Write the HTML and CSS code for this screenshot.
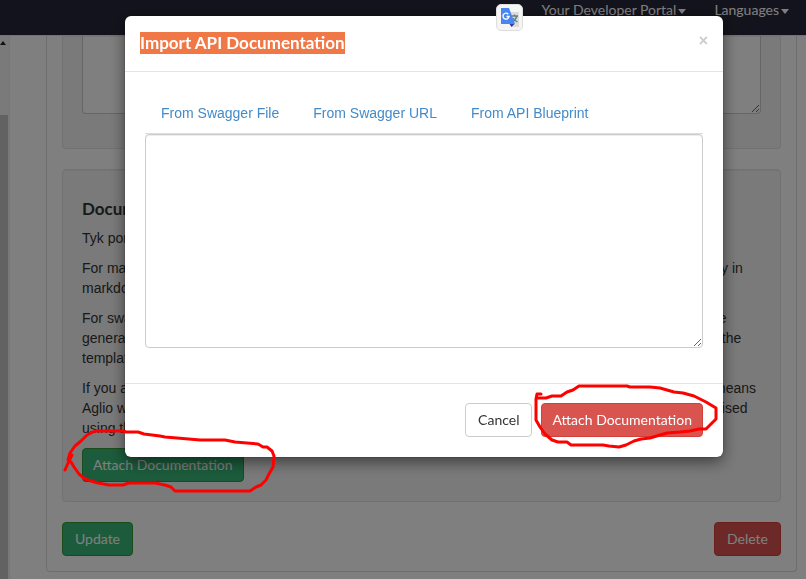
FILE: index.html
```html
<!DOCTYPE html>
<html lang="en">
<head>
<meta charset="utf-8">
<title>Developer Portal</title>
<link rel="stylesheet" href="styles.css">
</head>
<body>
<nav class="topbar">
  <a href="#">Your Developer Portal<i class="caret"></i></a>
  <a href="#">Languages<i class="caret"></i></a>
</nav>
<div class="page">
  <div class="scroller"><i class="arrow"></i><i class="thumb"></i></div>
  <main class="panel">
    <section class="well well-first">
      <textarea class="field" aria-label="Description"></textarea>
    </section>
    <section class="well">
      <h2>Documentation</h2>
      <p><span class="line"><span>Tyk portal</span></span></p>
      <p>
        <span class="line"><span>For markdown</span><span>tly in</span></span>
        <span class="line"><span>markdown</span></span>
      </p>
      <p>
        <span class="line"><span>For swagger</span><span>re</span></span>
        <span class="line"><span>generated</span><span>t the</span></span>
        <span class="line"><span>template</span></span>
      </p>
      <p>
        <span class="line"><span>If you are</span><span>means</span></span>
        <span class="line"><span>Aglio will</span><span>nised</span></span>
        <span class="line"><span>using the</span></span>
      </p>
      <button type="button" class="btn success attach">Attach Documentation</button>
    </section>
    <div class="actions">
      <button type="button" class="btn success">Update</button>
      <button type="button" class="btn danger">Delete</button>
    </div>
  </main>
</div>
<div class="backdrop">
  <div class="modal" role="dialog" aria-labelledby="modal-title">
    <header class="modal-header">
      <h1 id="modal-title"><mark>Import API Documentation</mark></h1>
      <button type="button" class="close" aria-label="Close">×</button>
    </header>
    <div class="modal-body">
      <div class="tabs">
        <a href="#">From Swagger File</a>
        <a href="#">From Swagger URL</a>
        <a href="#">From API Blueprint</a>
      </div>
      <textarea class="field source" aria-label="Documentation source"></textarea>
    </div>
    <footer class="modal-footer">
      <button type="button" class="btn plain">Cancel</button>
      <button type="button" class="btn danger attach">Attach Documentation</button>
    </footer>
  </div>
</div>
<button type="button" class="translate" aria-label="Translate">
  <svg width="20" height="20" viewBox="0 0 20 20">
    <path d="M8 4h11v15h-8z" fill="#dcdcdc"/>
    <path d="M11 8h7M14.500 6.500V8M17 8c-.8 3-2.500 4.500-5 6M13 10c1 2 2.500 3 4.500 4" fill="none" stroke="#607d80" stroke-width="1.300"/>
    <path d="M9.500 16h5l-3 3z" fill="#3436b4"/>
    <path d="M1 0h8l6 16H1z" fill="#4a86f0"/>
    <path d="M8.300 6.200A3 3 0 1 0 9 8.500H6.500" fill="none" stroke="#fff" stroke-width="1.400"/>
  </svg>
</button>
<svg class="marks" width="806" height="579" viewBox="0 0 806 579">
  <path d="M65 470L69 461 72 455M71 462L68 460 70 453 75 446 81 441 87 435 95 431H123L126 432H138L144 434 160 436 165 437 177 438 200 440H225L235 442 258 444 263 447H267L272 451 274 456 273 467 269 474 266 480 261 485 256 487 250 491H175L171 487 165 485 155 483H129L123 485H109L98 483 91 481 85 479 79 474 74 467 71 462"/>
  <path d="M541 394H537L536 399V420L540 427 545 434 552 440 558 442H567L571 445H603L609 446 619 447 626 445 634 441 641 439 650 438 660 435 667 433 680 432 690 431 699 429H706L710 425 716 419V408L706 402 694 396 683 393 674 392 660 388 650 387H630L627 386H579L573 390 567 392 561 396H552L546 398H537"/>
</svg>
</body>
</html>
```

FILE: styles.css
```css
* { box-sizing: border-box; }
body {
  margin: 0;
  min-height: 100vh;
  overflow: hidden;
  display: flex;
  flex-direction: column;
  background: #fff;
  color: #333;
  font: 14px/20px "Liberation Sans", Arial, sans-serif;
}
.topbar {
  height: 35px;
  padding: 0 17px;
  display: flex;
  justify-content: flex-end;
  gap: 28px;
  background: #27273a;
  font: 14px/20px Lato, sans-serif;
}
.topbar a { color: #fff; text-decoration: none; }
.caret {
  display: inline-block;
  margin-left: 2px;
  vertical-align: middle;
  border: 4px solid transparent;
  border-top: 5px solid #fff;
  border-bottom: 0;
}
.page { flex: 1; display: flex; border-top: 1px solid #e4e4e4; }
.scroller {
  width: 10px;
  margin-right: 36px;
  display: flex;
  flex-direction: column;
  background: #f5f5f5;
  border-right: 1px solid #eee;
}
.arrow {
  width: 6px;
  height: 4px;
  margin: 5px 0 70px;
  background: #222;
  clip-path: polygon(0 100%, 50% 0, 100% 100%);
}
.thumb { flex: 1; width: 8px; background: #c4c4c4; }
.panel {
  flex: 1;
  align-self: flex-start;
  margin-right: 9px;
  padding: 0 15px 15px;
  border: 1px solid #ddd;
  border-top: 0;
  border-radius: 0 0 4px 4px;
}
.well {
  margin-bottom: 20px;
  padding: 19px;
  background: #f5f5f5;
  border: 1px solid #e3e3e3;
  border-radius: 4px;
  box-shadow: inset 0 1px 1px rgba(0, 0, 0, .05);
}
.well-first { padding: 0 19px 34px; border-top: 0; border-radius: 0 0 4px 4px; }
.field {
  display: block;
  width: 100%;
  height: 78px;
  border: 1px solid #ccc;
  border-radius: 4px;
  background: #fff;
  box-shadow: inset 0 1px 1px rgba(0, 0, 0, .075);
}
.well-first .field { border-top: 0; border-radius: 0 0 4px 4px; }
.well h2 { margin: 10px 0; font: bold 17px/19px Lato, sans-serif; }
.well p { margin: 0 0 10px; }
.line { display: grid; grid-template-columns: 1fr 47px; white-space: nowrap; }
.actions { display: flex; justify-content: space-between; }
.btn {
  padding: 6px 12px;
  border: 1px solid #ccc;
  border-radius: 4px;
  font: 14px/20px Lato, sans-serif;
}
.attach { padding: 6px 10px; }
.success { background: #39b878; border-color: #339933; color: #fff; }
.danger { background: #d9534f; border-color: #d43f3a; color: #fff; }
.plain { background: #fff; color: #333; }
.backdrop {
  position: fixed;
  inset: 0;
  padding: 16px 83px 0 125px;
  background: rgba(0, 0, 0, .5);
}
.modal { background: #fff; border-radius: 6px; box-shadow: 0 5px 15px rgba(0, 0, 0, .5), 0 0 1px #000; }
.modal-header {
  display: flex;
  justify-content: space-between;
  align-items: flex-start;
  padding: 15px;
  border-bottom: 1px solid #e5e5e5;
}
.modal-header h1 { margin: 0; font: bold 17px/25px Lato, sans-serif; }
.modal-header mark { display: inline-block; margin-top: 1px; line-height: 22px; vertical-align: top; background: #f07746; color: #fff; }
.close {
  padding: 0;
  border: 0;
  background: none;
  color: #ccc;
  font: bold 16px/20px "Liberation Sans", Arial, sans-serif;
}
.modal-body { padding: 20px 20px 35px; }
.tabs { display: flex; gap: 2px; border-bottom: 1px solid #ddd; }
.tabs a { padding: 11px 16px 10px; color: #428bca; text-decoration: none; }
.source { height: 214px; }
.modal-footer {
  display: flex;
  justify-content: flex-end;
  gap: 9px;
  padding: 19px 20px 20px;
  border-top: 1px solid #e5e5e5;
}
.translate {
  position: fixed;
  left: 496px;
  top: 4px;
  width: 27px;
  height: 27px;
  padding: 3px;
  line-height: 0;
  background: #f5f5f5;
  border: 1px solid #ddd;
  border-radius: 5px;
}
.marks {
  position: fixed;
  left: 0;
  top: 0;
  pointer-events: none;
  fill: none;
  stroke: #f00;
  stroke-width: 3;
  stroke-linecap: round;
  stroke-linejoin: round;
}
```
